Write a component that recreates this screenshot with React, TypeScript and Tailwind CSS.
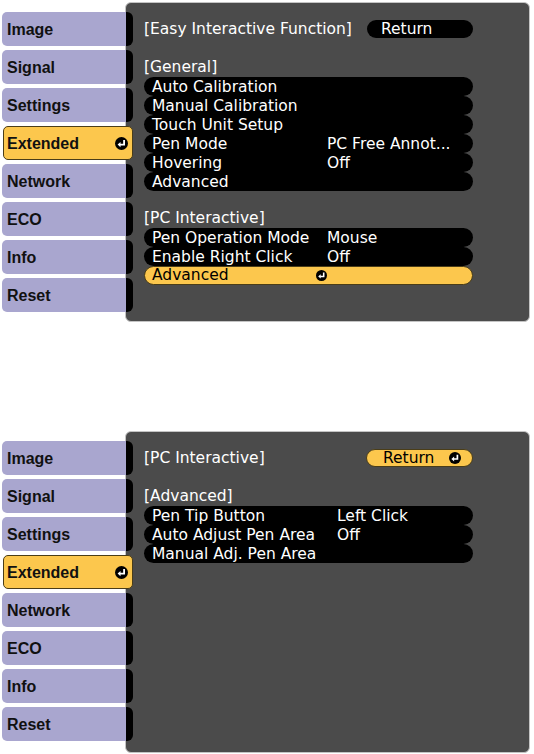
import React from "react";

const tabs = ["Image", "Signal", "Settings", "Extended", "Network", "ECO", "Info", "Reset"];

function EnterIcon({ size = 12 }: { size?: number }) {
  return (
    <svg width={size} height={size} viewBox="0 0 12 12" className="shrink-0">
      <circle cx="6" cy="6" r="6" fill="#000" />
      <path d="M8.4 2.8v4.2H4.6" stroke="#fff" strokeWidth="1.7" fill="none" />
      <path d="M2.4 7l2.7-2.4v4.8z" fill="#fff" />
    </svg>
  );
}

function Sidebar() {
  return (
    <div className="relative z-10 ml-[2px] flex w-[131px] flex-col gap-[4px] pt-[10px] font-['Liberation_Sans',Arial,sans-serif] text-[16px] font-bold text-[#111]">
      {tabs.map((t) =>
        t === "Extended" ? (
          <div
            key={t}
            className="ml-[1px] flex h-[34px] items-center justify-between rounded-[5px] border border-[#4a3d18] bg-[#fcc74d] pl-[3px] pr-[4px] pt-[1px]"
          >
            <span>{t}</span>
            <EnterIcon size={13} />
          </div>
        ) : (
          <div key={t} className="flex h-[34px]">
            <div className="flex flex-1 items-center rounded-l-[5px] bg-[#a9a6cf] pl-[5px] pt-[1px]">{t}</div>
            <div className="w-[7px] rounded-r-[6px] bg-black" />
          </div>
        )
      )}
    </div>
  );
}

type Row = { label: string; value?: string; active?: boolean };

function Rows({ rows, labelW }: { rows: Row[]; labelW: string }) {
  return (
    <div className="flex w-[329px] flex-col">
      {rows.map((r) =>
        r.active ? (
          <div
            key={r.label}
            className="flex h-[19px] items-center rounded-full border border-[#4a3d18] bg-[#fcc74d] pl-[7px] leading-[17px] text-black"
          >
            <span className="w-[164px]">{r.label}</span>
            <EnterIcon size={11} />
          </div>
        ) : (
          <div key={r.label} className="flex h-[19px] items-center rounded-full bg-black pl-[8px] pt-[1px] leading-[19px]">
            <span className={labelW}>{r.label}</span>
            {r.value && <span>{r.value}</span>}
          </div>
        )
      )}
    </div>
  );
}

function TopPanel() {
  return (
    <div className="-ml-[8px] h-[320px] w-[405px] rounded-[6px] border border-[#c4c4c4] bg-[#4b4b4b] pl-[18px] pt-[17px] text-[15.5px] text-white">
      <div className="flex h-[18px] items-center leading-[18px]">
        <span className="w-[223px]">[Easy Interactive Function]</span>
        <div className="flex h-[18px] w-[106px] items-center rounded-full bg-black pl-[14px]">Return</div>
      </div>
      <div className="mt-[20px] h-[19px] leading-[19px]">[General]</div>
      <Rows
        labelW="w-[175px]"
        rows={[
          { label: "Auto Calibration" },
          { label: "Manual Calibration" },
          { label: "Touch Unit Setup" },
          { label: "Pen Mode", value: "PC Free Annot..." },
          { label: "Hovering", value: "Off" },
          { label: "Advanced" },
        ]}
      />
      <div className="mt-[18px] h-[19px] leading-[19px]">[PC Interactive]</div>
      <Rows
        labelW="w-[175px]"
        rows={[
          { label: "Pen Operation Mode", value: "Mouse" },
          { label: "Enable Right Click", value: "Off" },
          { label: "Advanced", active: true },
        ]}
      />
    </div>
  );
}

function BottomPanel() {
  return (
    <div className="-ml-[8px] h-[322px] w-[405px] rounded-[6px] border border-[#c4c4c4] bg-[#4b4b4b] pl-[18px] pt-[17px] text-[15.5px] text-white">
      <div className="flex h-[18px] items-center leading-[18px]">
        <span className="w-[222px]">[PC Interactive]</span>
        <div className="flex h-[18px] w-[107px] items-center rounded-full border border-[#4a3d18] bg-[#fcc74d] pl-[16px] text-black">
          <span className="w-[66px]">Return</span>
          <EnterIcon size={12} />
        </div>
      </div>
      <div className="mt-[20px] h-[19px] leading-[19px]">[Advanced]</div>
      <Rows
        labelW="w-[185px]"
        rows={[
          { label: "Pen Tip Button", value: "Left Click" },
          { label: "Auto Adjust Pen Area", value: "Off" },
          { label: "Manual Adj. Pen Area" },
        ]}
      />
    </div>
  );
}

export default function App() {
  return (
    <div className="h-[754px] w-[534px] overflow-hidden bg-white pt-[2px] font-['DejaVu_Sans',Verdana,sans-serif]">
      <div className="flex">
        <Sidebar />
        <TopPanel />
      </div>
      <div className="mt-[109px] flex">
        <Sidebar />
        <BottomPanel />
      </div>
    </div>
  );
}
